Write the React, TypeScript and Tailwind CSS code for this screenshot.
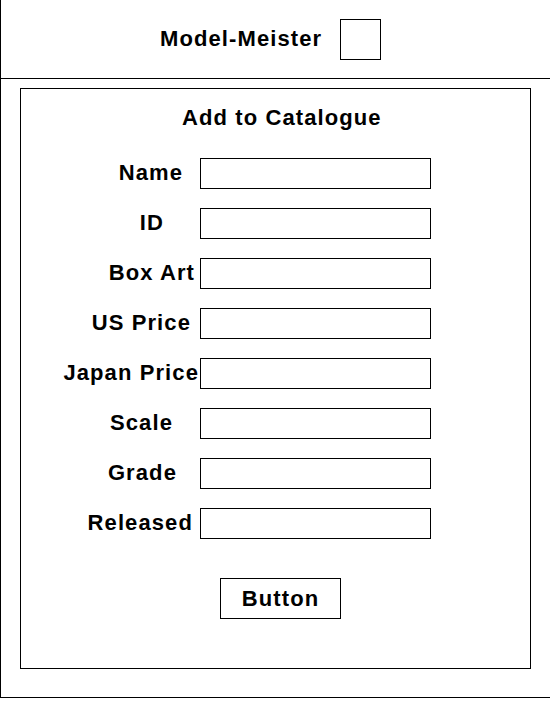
import React from "react";

const fields: { label: string; pr: string }[] = [
  { label: "Name", pr: "pr-[17px]" },
  { label: "ID", pr: "pr-[36px]" },
  { label: "Box Art", pr: "pr-[5px]" },
  { label: "US Price", pr: "pr-[9px]" },
  { label: "Japan Price", pr: "pr-[1px]" },
  { label: "Scale", pr: "pr-[27px]" },
  { label: "Grade", pr: "pr-[23px]" },
  { label: "Released", pr: "pr-[7px]" },
];

export default function App() {
  return (
    <div
      className="w-[550px] h-[698px] bg-white text-black border-l border-b border-black font-bold text-[22px] tracking-[1.1px]"
      style={{ fontFamily: '"Liberation Sans", Arial, sans-serif' }}
    >
      <header className="h-[79px] border-b border-black flex items-center pl-[159px] gap-[18px]">
        <span className="leading-[26px]">Model-Meister</span>
        <div className="w-[41px] h-[41px] border border-black" />
      </header>
      <section className="ml-[19px] mt-[9px] w-[511px] h-[581px] border border-black flex flex-col">
        <h1 className="pl-[161px] pt-[16px] leading-[26px]">Add to Catalogue</h1>
        <div className="mt-[27px] flex flex-col gap-[19px]">
          {fields.map((f) => (
            <div key={f.label} className="flex items-center h-[31px]">
              <div className={`w-[179px] text-right leading-[26px] whitespace-nowrap pb-[1px] ${f.pr}`}>
                {f.label}
              </div>
              <input
                type="text"
                className="w-[231px] h-[31px] border border-black bg-white outline-none"
              />
            </div>
          ))}
        </div>
        <div className="mt-[39px] ml-[199px]">
          <button className="w-[121px] h-[41px] border border-black bg-white flex items-center justify-center leading-[26px] tracking-[1.1px] font-bold">
            Button
          </button>
        </div>
      </section>
    </div>
  );
}
